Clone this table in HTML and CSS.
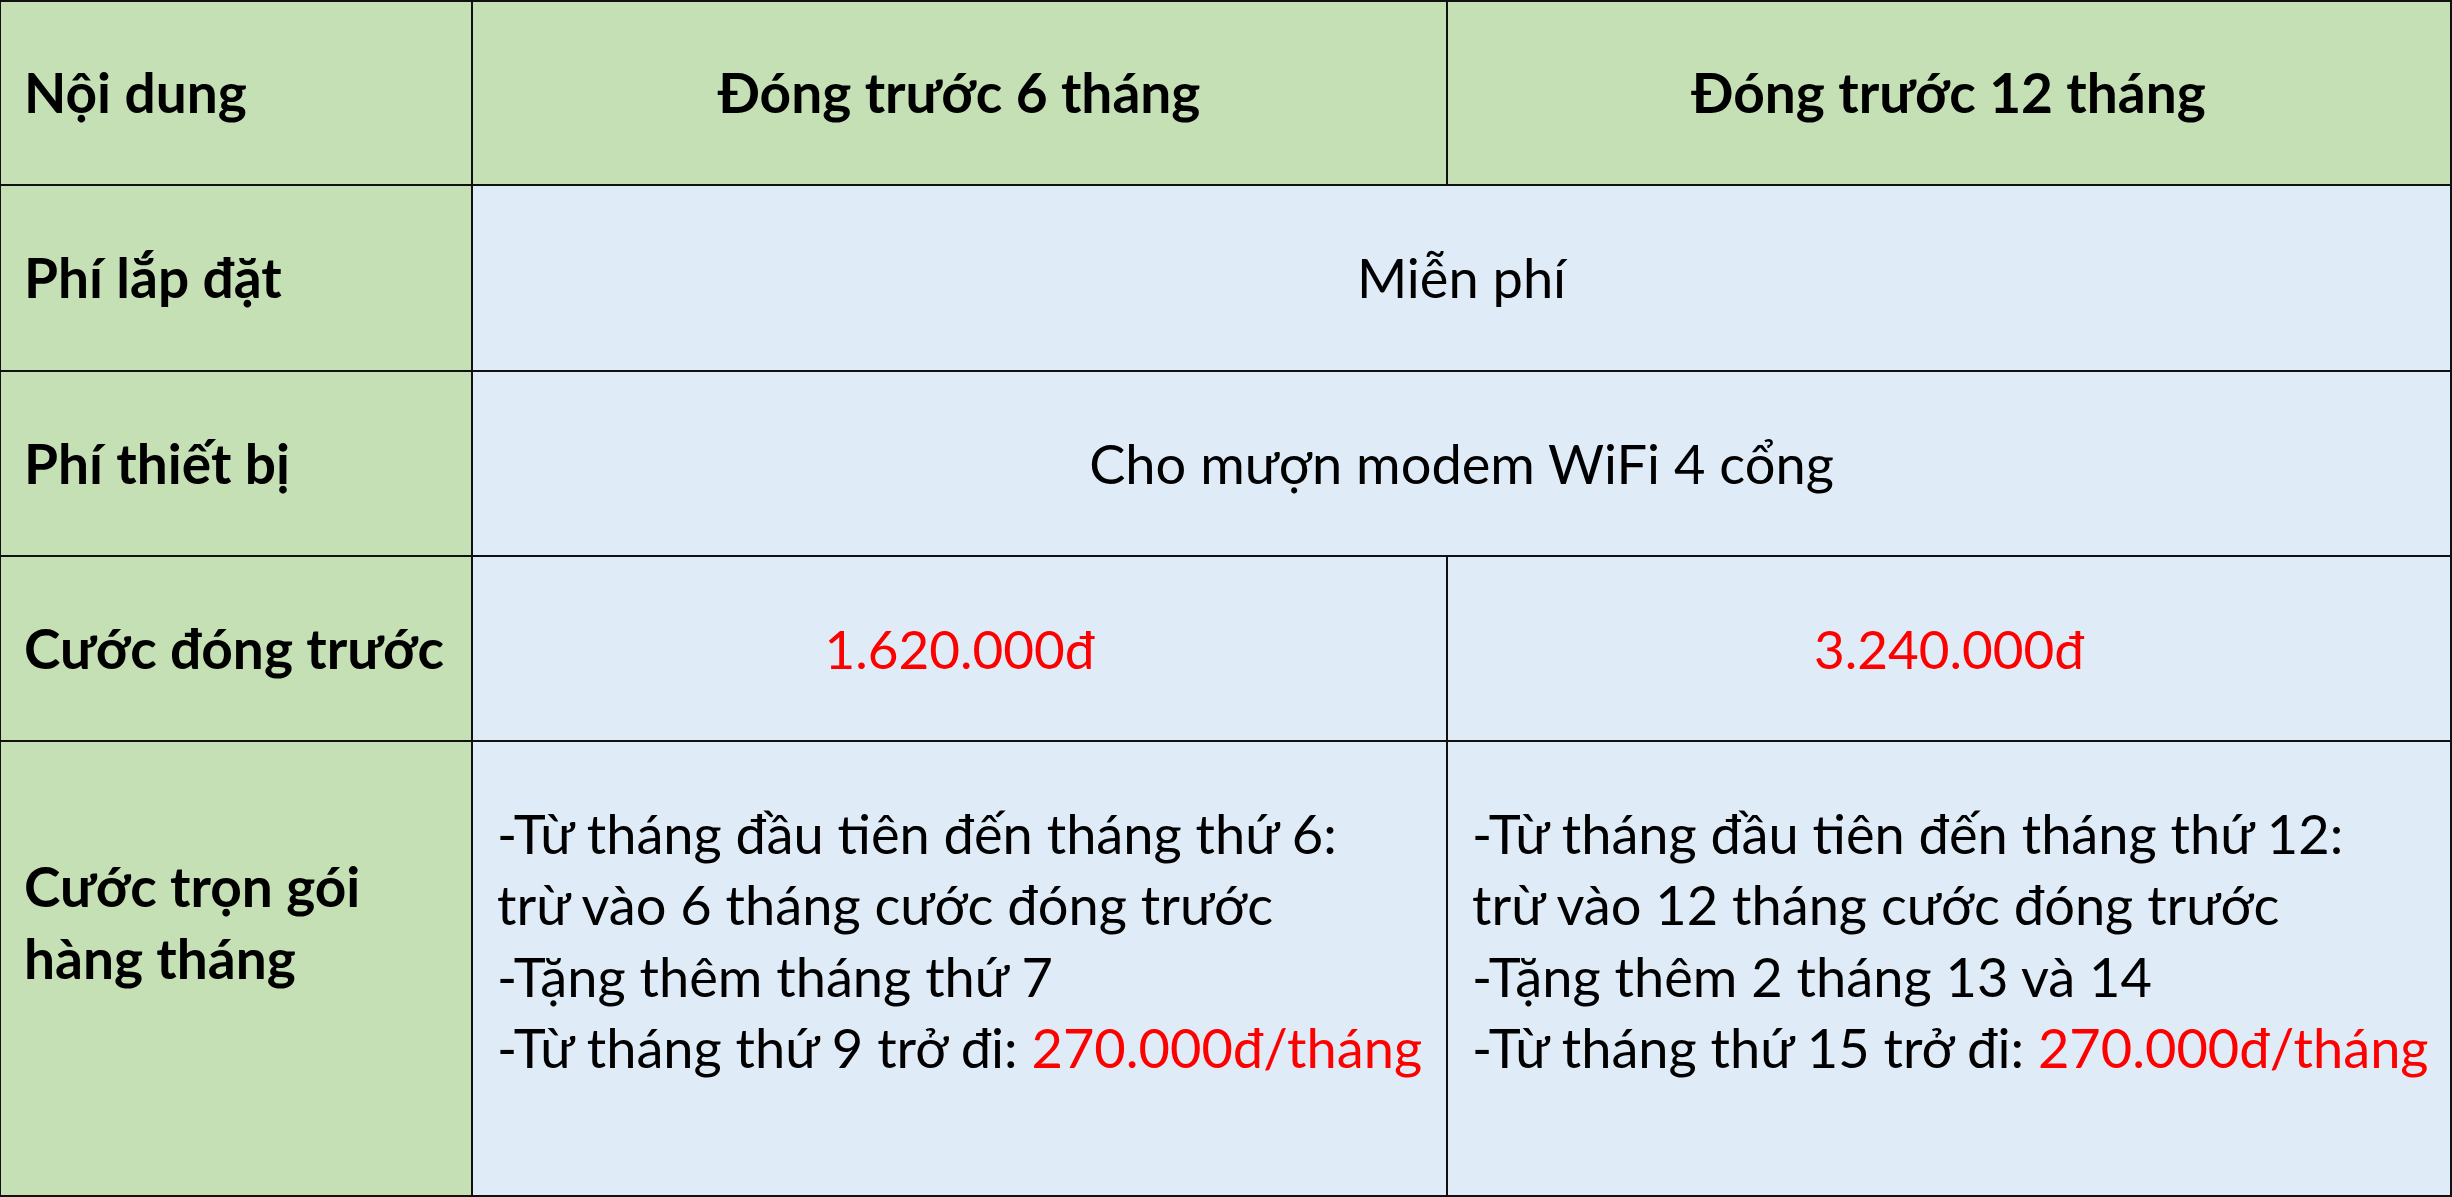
FILE: index.html
```html
<!DOCTYPE html>
<html lang="vi">
<head>
<meta charset="utf-8">
<title>Bảng cước đóng trước</title>
<link rel="stylesheet" href="styles.css">
</head>
<body>
<div class="table">
  <div class="cell label head-row">Nội dung</div>
  <div class="cell label head-row center">Đóng trước 6 tháng</div>
  <div class="cell label head-row center">Đóng trước 12 tháng</div>

  <div class="cell label">Phí lắp đặt</div>
  <div class="cell body center span2">Miễn phí</div>

  <div class="cell label">Phí thiết bị</div>
  <div class="cell body center span2">Cho mượn modem WiFi 4 cổng</div>

  <div class="cell label">Cước đóng trước</div>
  <div class="cell body center price"><span class="red">1.620.000đ</span></div>
  <div class="cell body center price"><span class="red">3.240.000đ</span></div>

  <div class="cell label tall-label">
    <div class="lines">
      <div>Cước trọn gói</div>
      <div>hàng tháng</div>
    </div>
  </div>
  <div class="cell body tall">
    <div class="lines">
      <div>-Từ tháng đầu tiên đến tháng thứ 6:</div>
      <div>trừ vào 6 tháng cước đóng trước</div>
      <div>-Tặng thêm tháng thứ 7</div>
      <div>-Từ tháng thứ 9 trở đi: <span class="red">270.000đ/tháng</span></div>
    </div>
  </div>
  <div class="cell body tall">
    <div class="lines">
      <div>-Từ tháng đầu tiên đến tháng thứ 12:</div>
      <div>trừ vào 12 tháng cước đóng trước</div>
      <div>-Tặng thêm 2 tháng 13 và 14</div>
      <div>-Từ tháng thứ 15 trở đi: <span class="red">270.000đ/tháng</span></div>
    </div>
  </div>
</div>
</body>
</html>
```

FILE: styles.css
```css
html, body {
  margin: 0;
  padding: 0;
  background: #ffffff;
}

.table {
  width: 2452px;
  height: 1197px;
  box-sizing: border-box;
  display: grid;
  grid-template-columns: 470px 973px 1002px;
  grid-template-rows: 182px 184px 183px 183px 453px;
  gap: 2px;
  padding: 2px 2px 2px 1px;
  background: #111111;
  font-family: Lato, "Noto Sans", sans-serif;
  font-size: 54.2px;
  line-height: 71.5px;
  color: #000000;
}

.cell {
  display: flex;
  align-items: center;
  padding: 0 24px;
  white-space: nowrap;
  background: #dfebf7;
}

.label {
  background: #c5e0b4;
  font-weight: 700;
  font-size: 55px;
  padding-left: 23px;
}

.center {
  justify-content: center;
  text-align: center;
}

.span2 {
  grid-column: span 2;
}

.price {
  font-size: 53px;
}

.tall {
  padding-bottom: 56px;
}

.tall-label {
  padding-bottom: 92px;
}

.red {
  color: #ff0000;
}
```
